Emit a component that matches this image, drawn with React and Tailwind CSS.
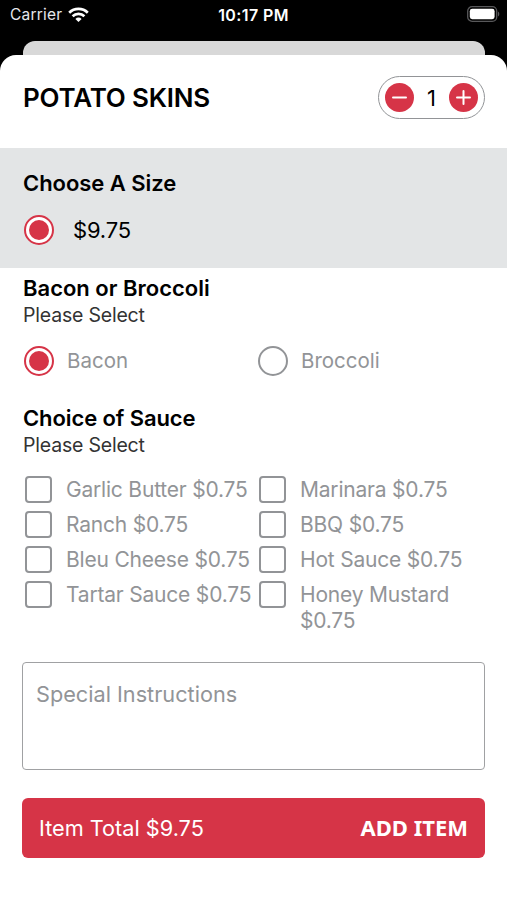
import { useState } from 'react';

const sauces = [
    ['Garlic Butter', 'Ranch', 'Bleu Cheese', 'Tartar Sauce'],
    ['Marinara', 'BBQ', 'Hot Sauce', 'Honey Mustard'],
];

const PRICE = 9.75;
const SAUCE_PRICE = 0.75;

function StatusBar() {
    return (
        <div className="h-[41px] px-[10px] grid grid-cols-3 items-start text-white">
            <div className="flex items-center gap-[6px] h-[30px]">
                <span className="text-[15.5px] tracking-[0.2px] text-gray-200">Carrier</span>
                <svg width="21" height="16" viewBox="0 0 21 16" fill="none" stroke="white" strokeWidth="2.7">
                    <path d="M1.2 5.7 A13.4 13.4 0 0 1 19.8 5.7" />
                    <path d="M4.6 9.3 A8.4 8.4 0 0 1 16.4 9.3" />
                    <path d="M10.5 15 L7.4 11.9 A4.4 4.4 0 0 1 13.6 11.9 Z" fill="white" stroke="none" />
                </svg>
            </div>
            <div className="h-[29px] flex items-center justify-center text-[16px] tracking-[0.4px] font-semibold whitespace-nowrap">10:17 PM</div>
            <div className="h-[28px] flex items-center justify-end">
                <svg width="33" height="16" viewBox="0 0 33 16" className="-mr-[3px]">
                    <rect x="0.7" y="0.7" width="29" height="14.6" rx="4.4" fill="none" stroke="#58585a" strokeWidth="1.3" />
                    <rect x="2.8" y="2.8" width="24.8" height="10.4" rx="2.4" fill="white" />
                    <path d="M31 5.5 A3 3 0 0 1 31 10.5 Z" fill="#58585a" />
                </svg>
            </div>
        </div>
    );
}

function Stepper({ count, onChange }) {
    return (
        <div className="w-[107px] h-[43px] px-[6px] rounded-full border-[1.5px] border-[#929497] flex items-center justify-between">
            <button type="button" onClick={() => onChange(Math.max(1, count - 1))} className="size-[29px] rounded-full bg-[#d63447] flex items-center justify-center">
                <svg width="15" height="15" viewBox="0 0 15 15" stroke="white" strokeWidth="2" strokeLinecap="round">
                    <path d="M1 7.5 H14" />
                </svg>
            </button>
            <span className="text-[22px] leading-none">{count}</span>
            <button type="button" onClick={() => onChange(count + 1)} className="size-[29px] rounded-full bg-[#d63447] flex items-center justify-center">
                <svg width="15" height="15" viewBox="0 0 15 15" stroke="white" strokeWidth="2" strokeLinecap="round">
                    <path d="M1 7.5 H14 M7.5 1 V14" />
                </svg>
            </button>
        </div>
    );
}

function Radio({ checked, onClick }) {
    return (
        <button
            type="button"
            role="radio"
            aria-checked={checked}
            onClick={onClick}
            className={`size-[30px] shrink-0 rounded-full border-2 flex items-center justify-center ${checked ? 'border-[#d63447] bg-white' : 'border-[#929497]'}`}
        >
            {checked && <span className="size-5 rounded-full bg-[#d63447]" />}
        </button>
    );
}

function SauceOption({ name, checked, onToggle }) {
    return (
        <div className="flex items-start gap-[14px] min-h-[35px]">
            <button
                type="button"
                role="checkbox"
                aria-checked={checked}
                onClick={onToggle}
                className={`size-[27px] shrink-0 rounded-[4px] border-2 border-[#929497] ${checked ? 'bg-[#d63447]' : ''}`}
            />
            <span className="pt-px text-[21px] leading-[26px] tracking-[-0.2px] text-[#929497]">{name} $0.75</span>
        </div>
    );
}

export default function App() {
    const [count, setCount] = useState(1);
    const [filling, setFilling] = useState('Bacon');
    const [selected, setSelected] = useState([]);

    const total = count * (PRICE + selected.length * SAUCE_PRICE);

    const toggleSauce = (name) => {
        setSelected(prev => prev.includes(name) ? prev.filter(s => s !== name) : [...prev, name]);
    };

    return (
        <div className="w-full h-screen overflow-hidden bg-black text-black font-['Inter','Liberation_Sans',sans-serif] flex flex-col">
            <StatusBar />
            {/* edge of the sheet underneath */}
            <div className="ml-[23px] mr-[22px] h-[14px] shrink-0 rounded-t-[12px] bg-[#d8d8d8]" />

            <div className="flex-1 rounded-t-[16px] bg-white">
                <header className="pl-[23px] pr-[22px] pt-[21px] pb-[29px] flex items-center justify-between">
                    <h1 className="text-[26px] leading-none font-semibold tracking-[-0.2px]">POTATO SKINS</h1>
                    <Stepper count={count} onChange={setCount} />
                </header>

                <section className="h-[120px] px-[23px] pt-[21px] bg-[#e3e5e6]">
                    <h2 className="text-[22px] leading-[28px] font-semibold tracking-[-0.05px]">Choose A Size</h2>
                    <div className="mt-[18px] pl-px flex items-center gap-[19px]">
                        <Radio checked />
                        <span className="text-[22px] leading-none tracking-[-0.2px]">$9.75</span>
                    </div>
                </section>

                <section className="px-[23px] pt-[6px]">
                    <h2 className="text-[22px] leading-[28px] font-semibold">Bacon or Broccoli</h2>
                    <p className="text-[19.5px] leading-[26px] tracking-[-0.2px] text-[#333]">Please Select</p>
                    <div className="mt-[18px] pl-px grid grid-cols-[234px_1fr]">
                        {['Bacon', 'Broccoli'].map(name => (
                            <div key={name} className="flex items-center gap-[13px]">
                                <Radio checked={filling === name} onClick={() => setFilling(name)} />
                                <span className="text-[20.5px] leading-none text-[#929497]">{name}</span>
                            </div>
                        ))}
                    </div>
                </section>

                <section className="px-[23px] pt-[28px]">
                    <h2 className="text-[22px] leading-[28px] font-semibold tracking-[-0.1px]">Choice of Sauce</h2>
                    <p className="text-[19.5px] leading-[26px] tracking-[-0.2px] text-[#333]">Please Select</p>
                    <div className="mt-[18px] pl-[2px] grid grid-cols-[234px_1fr]">
                        {sauces.map((column, i) => (
                            <div key={i}>
                                {column.map(name => (
                                    <SauceOption
                                        key={name}
                                        name={name}
                                        checked={selected.includes(name)}
                                        onToggle={() => toggleSauce(name)}
                                    />
                                ))}
                            </div>
                        ))}
                    </div>
                </section>

                <div className="px-[22px] pt-[28px]">
                    <textarea
                        placeholder="Special Instructions"
                        className="block w-full h-[108px] resize-none rounded-[4px] border-[1.5px] border-[#a0a1a3] px-[13px] py-[17px] text-[21.7px] leading-[28px] placeholder:text-[#929497]"
                    />
                    <button type="button" className="mt-[28px] w-full h-[60px] px-[17px] rounded-[6px] bg-[#d63447] text-white flex items-center justify-between">
                        <span className="pt-px text-[21.7px]">Item Total ${total.toFixed(2)}</span>
                        <span className="pb-px text-[22px] font-bold font-['Noto_Sans','Open_Sans',sans-serif]">ADD ITEM</span>
                    </button>
                </div>
            </div>
        </div>
    );
}
